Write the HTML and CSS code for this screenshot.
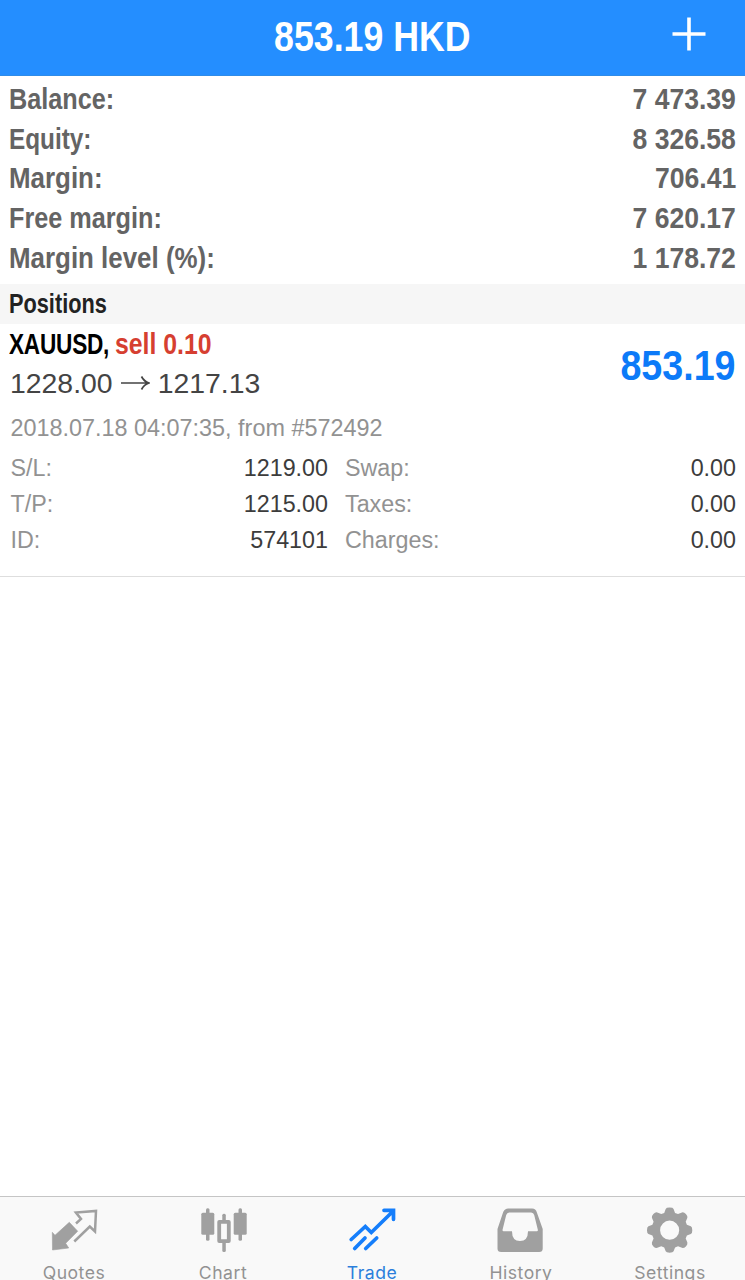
FILE: index.html
```html
<!DOCTYPE html>
<html lang="en">
<head>
<meta charset="utf-8">
<title>Trade</title>
<link rel="stylesheet" href="styles.css">
</head>
<body>
<div class="app">
  <header class="header">
    <h1 class="title">853.19 HKD</h1>
    <svg class="add" viewBox="0 0 34 34"><path d="M17 0.5V33.5M0.5 17H33.5" stroke="#fff" stroke-width="3.6"/></svg>
  </header>
  <dl class="summary">
    <div class="sum-row"><dt>Balance:</dt><dd>7 473.39</dd></div>
    <div class="sum-row"><dt class="tight">Equity:</dt><dd>8 326.58</dd></div>
    <div class="sum-row"><dt class="wide">Margin:</dt><dd>706.41</dd></div>
    <div class="sum-row"><dt>Free margin:</dt><dd>7 620.17</dd></div>
    <div class="sum-row"><dt class="wide">Margin level (%):</dt><dd>1 178.72</dd></div>
  </dl>
  <h2 class="section"><span>Positions</span></h2>
  <section class="position">
    <div class="top">
      <div>
        <div class="heading"><span class="symbol">XAUUSD,</span><span class="sell">sell 0.10</span></div>
        <div class="prices"><span>1228.00</span><svg class="arrow" viewBox="0 0 29 16"><path d="M0 8H28M20.500 1.500Q23 6.500 28 8Q23 9.500 20.500 14.500" fill="none" stroke="#444" stroke-width="1.700"/></svg><span>1217.13</span></div>
      </div>
      <div class="profit">853.19</div>
    </div>
    <div class="opened">2018.07.18 04:07:35, from #572492</div>
    <div class="details">
      <span>S/L:</span><b>1219.00</b><span>Swap:</span><b>0.00</b>
      <span>T/P:</span><b>1215.00</b><span>Taxes:</span><b>0.00</b>
      <span>ID:</span><b>574101</b><span>Charges:</span><b>0.00</b>
    </div>
  </section>
  <nav class="tabs">
    <a class="tab">
      <svg viewBox="0 0 48 48"><path d="M2.300 25.300L5 28.300L19.300 15.300L27.700 24.200L15.700 36.300L18.700 41L2.500 43Z" fill="#a0a0a0" stroke="#a0a0a0" stroke-width=".6"/><path d="M26 16.500L31 11.900L25.900 5.600L46 3.900L45 24.500L39.800 19.500L24.300 34.500" fill="none" stroke="#a0a0a0" stroke-width="2.500"/></svg>
      <span>Quotes</span></a>
    <a class="tab">
      <svg viewBox="0 0 48 48"><g fill="#a0a0a0"><rect x="2.300" y="5.700" width="13" height="22" rx="1.500"/><rect x="7" y="1.300" width="3.500" height="32.400" rx="1.500"/><rect x="34.700" y="5.700" width="13" height="22" rx="1.500"/><rect x="39.500" y="1.300" width="3.500" height="32.400" rx="1.500"/><rect x="23.300" y="6.700" width="3.500" height="8" rx="1.500"/><rect x="23.300" y="34" width="3.500" height="11" rx="1.500"/></g><rect x="20.200" y="14.900" width="9.600" height="19.200" fill="none" stroke="#a0a0a0" stroke-width="3.800" stroke-linejoin="round"/></svg>
      <span>Chart</span></a>
    <a class="tab active">
      <svg viewBox="0 0 48 48"><path d="M3.200 32.500L17.300 19.500L23.300 25.500L45 4.300M36 3.300H45.500V12.300M6.700 41.500L17 31M17.700 41.500L28.700 31" fill="none" stroke="#157efb" stroke-width="3.700" stroke-linecap="round"/></svg>
      <span>Trade</span></a>
    <a class="tab">
      <svg viewBox="0 0 48 48"><path transform="translate(-.8 -.4)" fill="#a0a0a0" fill-rule="evenodd" d="M12 2H36Q39.500 2 40.500 5.500L46.500 22.500V42Q46.500 45.500 43 45.500H5Q1.300 45.500 1.300 42V22.500L7 5.500Q8.500 2 12 2ZM13 6Q10.800 6 10 8.500L6.300 23.500Q6.300 24.700 7.300 24.700H15.800Q15.800 34.500 23.800 34.500Q31.800 34.500 31.800 24.700H40.700Q41.700 24.700 41.700 23.500L38 8.500Q37.300 6 35 6Z"/></svg>
      <span>History</span></a>
    <a class="tab">
      <svg viewBox="0 0 48 48"><path transform="translate(0 -.5) scale(.985)" fill="#a0a0a0" fill-rule="evenodd" d="M20 2.500Q20.500 1 24 1Q27.500 1 28 2.500L29.500 6.500L32.500 7.700L36.500 6Q38.500 5.500 40.500 7.500Q42.500 9.500 42 11.500L40.300 15.500L41.500 18.500L45.500 20Q47 20.500 47 24Q47 27.500 45.500 28L41.500 29.500L40.300 32.500L42 36.500Q42.500 38.500 40.500 40.500Q38.500 42.500 36.500 42L32.500 40.300L29.500 41.500L28 45.500Q27.500 47 24 47Q20.500 47 20 45.500L18.500 41.500L15.500 40.300L11.500 42Q9.500 42.500 7.500 40.500Q5.500 38.500 6 36.500L7.700 32.500L6.500 29.500L2.500 28Q1 27.500 1 24Q1 20.500 2.500 20L6.500 18.500L7.700 15.500L6 11.500Q5.500 9.500 7.500 7.500Q9.500 5.500 11.500 6L15.500 7.700L18.500 6.500ZM24 14.300A9.700 9.700 0 1 0 24 33.700A9.700 9.700 0 1 0 24 14.300Z"/></svg>
      <span>Settings</span></a>
  </nav>
</div>
</body>
</html>
```

FILE: styles.css
```css
* { box-sizing: border-box; margin: 0; padding: 0; }
body { font-family: "Liberation Sans", Arial, sans-serif; background: #fff; overflow: hidden; }
.app { width: 745px; height: 1280px; display: flex; flex-direction: column; overflow: hidden; }
.header { height: 76px; flex: none; background: #248eff; border-bottom: 1px solid #2f8ce8; display: grid; grid-template-columns: 1fr auto 1fr; align-items: center; }
.title { grid-column: 2; font-size: 43px; line-height: 50px; color: #fff; white-space: nowrap; transform: scaleX(.83); margin-bottom: 3px; }
.add { width: 34px; height: 34px; justify-self: end; margin: 0 39px 7px 0; }
.summary { height: 208px; flex: none; padding: 3px 9px 0; color: #646464; font-size: 29.5px; font-weight: bold; }
.sum-row { height: 39.7px; line-height: 39.7px; display: flex; justify-content: space-between; white-space: nowrap; }
.sum-row dt { transform: scaleX(.855); transform-origin: left; }
.sum-row .tight { transform: scaleX(.825); }
.sum-row .wide { transform: scaleX(.878); }
.sum-row dd { transform: scaleX(.9); transform-origin: right; }
.section { height: 40px; flex: none; background: #f6f6f6; padding-left: 9px; font-size: 27px; line-height: 41px; color: #222; }
.section span { display: inline-block; transform: scaleX(.805); transform-origin: left; }
.position { height: 253px; flex: none; border-bottom: 1px solid #dedede; padding: 0 9px; }
.top { display: flex; justify-content: space-between; height: 84px; }
.heading { display: grid; grid-template-columns: 106px 1fr; font-size: 29px; font-weight: bold; line-height: 41px; height: 40px; white-space: nowrap; color: #000; }
.symbol { transform: scaleX(.78); transform-origin: left; letter-spacing: -.3px; }
.sell { color: #d63f31; transform: scaleX(.855); transform-origin: left; }
.prices { display: flex; align-items: center; gap: 8px; padding-left: 1px; font-size: 28.4px; line-height: 38px; color: #444; }
.arrow { width: 29px; height: 16px; }
.profit { font-size: 43px; font-weight: bold; line-height: 82px; color: #0c7af8; transform: scaleX(.875); transform-origin: right; }
.opened { font-size: 23.4px; line-height: 41px; color: #929292; padding: 0 1.5px; height: 42px; white-space: nowrap; }
.details { display: grid; grid-template-columns: 139.5px 178px 100px 1fr; grid-auto-rows: 36px; line-height: 37px; font-size: 23.3px; color: #929292; padding-left: 1.5px; }
.details span:nth-of-type(even) { padding-left: 17px; }
.details b { font-weight: normal; color: #3c3c3c; text-align: right; }
.tabs { margin-top: auto; height: 84px; flex: none; background: #f9f9f9; border-top: 1px solid #c5c5c5; display: grid; grid-template-columns: repeat(5, 1fr); }
.tab { display: flex; flex-direction: column; align-items: center; padding: 10px 1px 0 0; font: 17.6px/22px Inter, sans-serif; letter-spacing: .5px; color: #929292; }
.tab svg { width: 48px; height: 48px; flex: none; margin-bottom: 7px; }
.active { color: #2b7fdc; }
```
